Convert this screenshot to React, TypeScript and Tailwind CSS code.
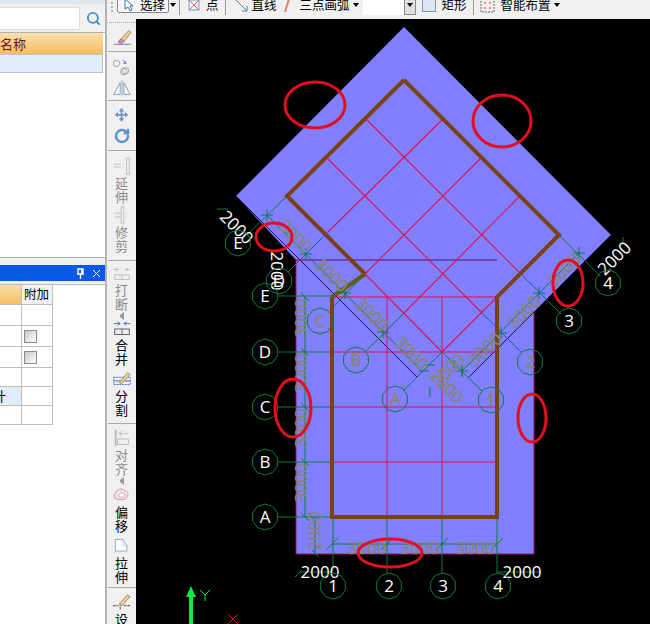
import React from "react";
import { Search, RotateCw } from "lucide-react";

const cjk = { fontFamily: '"Noto Sans CJK SC", "Liberation Sans", sans-serif' };

const G = "#0f7a3c";
const P = "#e0104f";
const GT = "#87876f";

function Sep({ cls }: { cls: string }) {
  return <div className={`shrink-0 w-[28px] mx-auto bg-[#a9a9a9] h-px ${cls}`} />;
}

function Tool({ icon, text, gray, cls, arrow }: { icon: React.ReactNode; text?: string[]; gray?: boolean; cls?: string; arrow?: boolean }) {
  return (
    <div className={`shrink-0 flex flex-col items-center ${cls ?? ""}`}>
      <div className="h-[20px] w-full flex items-center justify-center">{icon}</div>
      {text && (
        <div className={`flex flex-col items-center text-[13px] leading-[14px] ${gray ? "text-[#8a8a8a]" : "text-black"}`}>
          {text.map((t, i) => (
            <span key={i} className="h-[14px]">{t}</span>
          ))}
        </div>
      )}
      {arrow && <div className="h-[8px] w-0 border-y-[3px] border-r-[4px] border-y-transparent border-r-[#9a9a9a] mt-[1px]" />}
    </div>
  );
}

const Ic = ({ children, s = 20 }: { children: React.ReactNode; s?: number }) => (
  <svg width={s} height={(s * 20) / 22} viewBox="0 0 22 20" fill="none">{children}</svg>
);

const icons = {
  brush: (
    <Ic>
      <path d="M2 18h19" stroke="#6b7a8c" />
      <path d="M9 13 18 3l3 2-8 10z" fill="#e6cf9a" stroke="#a58a55" />
      <path d="M7 16c0-3 3-4 5-3l1 2c-1 2-4 2-6 1z" fill="#d98fb0" stroke="#a0608a" />
    </Ic>
  ),
  copy: (
    <Ic>
      <circle cx="5" cy="6" r="3.5" stroke="#9a9a9a" />
      <path d="M12 2l3 4m0 0v-2.5m0 2.5h-2.5" stroke="#4a7fb5" />
      <circle cx="15" cy="14" r="3.5" stroke="#9a9a9a" />
      <circle cx="13" cy="15" r="3.5" stroke="#9a9a9a" />
    </Ic>
  ),
  mirror: (
    <Ic>
      <path d="M11 1v18" stroke="#9aa8b8" />
      <path d="M9 4v13H2zM13 4v13h7z" stroke="#7a98bc" fill="#f6f9fd" />
    </Ic>
  ),
  move: (
    <Ic s={15}>
      <path d="M11 2v16M3 10h16" stroke="#6a96c4" strokeWidth="2.5" />
      <path d="M11 0l4 5H7zM11 20l4-5H7zM1 10l5-4v8zM21 10l-5-4v8z" fill="#6a96c4" />
    </Ic>
  ),
  rotate: <RotateCw size={16} strokeWidth={3.6} color="#5a8fd0" />,
  extend: (
    <Ic>
      <path d="M2 8h8M2 11h8" stroke="#c0c0c0" />
      <path d="M11 8h3M11 11h3" stroke="#d0d0d0" strokeDasharray="1 1" />
      <rect x="16" y="1" width="3" height="18" stroke="#bcbcbc" />
    </Ic>
  ),
  trim: (
    <Ic>
      <path d="M3 8h7M3 12h7" stroke="#bcbcbc" />
      <path d="M14 8h4M14 12h4" stroke="#d0d0d0" strokeDasharray="1 1" />
      <rect x="10" y="1" width="3" height="18" stroke="#bcbcbc" />
    </Ic>
  ),
  brk: (
    <Ic>
      <path d="M2 6h6m-2-2-2 2 2 2M20 6h-6m2-2 2 2-2 2" stroke="#b4bcc4" />
      <rect x="3" y="12" width="16" height="5" stroke="#bcbcbc" />
      <path d="M11 12v5" stroke="#bcbcbc" />
    </Ic>
  ),
  combine: (
    <Ic>
      <path d="M2 5h7m-3-2 3 2-3 2M20 5h-7m3-2-3 2 3 2" stroke="#3d78c0" />
      <rect x="3" y="11" width="16" height="6" stroke="#556" />
      <path d="M11 11v6" stroke="#556" />
    </Ic>
  ),
  split: (
    <Ic>
      <rect x="2" y="8" width="18" height="8" stroke="#3a5fc0" strokeDasharray="2 1" />
      <path d="M2 12h18" stroke="#3a5fc0" />
      <path d="M8 14 17 3l3 2-9 10z" fill="#e6cf9a" stroke="#a58a55" />
    </Ic>
  ),
  align: (
    <Ic>
      <path d="M4 1v18" stroke="#b8b8b8" strokeWidth="2" />
      <path d="M18 5H8m3-3-3 3 3 3" stroke="#b8b8b8" />
      <rect x="6" y="11" width="12" height="6" stroke="#b8b8b8" />
    </Ic>
  ),
  offset: (
    <Ic s={17}>
      <path d="M5 16a5 5 0 0 1-1-9c1-4 8-6 11-2 4 0 6 4 3 8-1 2-2 3-4 3z" stroke="#d8708a" fill="#f8e4ea" />
      <path d="M8 13c-2-1-1-4 1-4 1-2 4-2 5 0 2 0 2 3 0 4z" stroke="#8fa3b8" fill="#fff" />
    </Ic>
  ),
  stretch: (
    <Ic s={17}>
      <path d="M3 2h10l5 8v7H3z" stroke="#7a98bc" fill="#f8fafd" />
      <path d="M13 2v8h5" stroke="#9ab" strokeDasharray="1 1" />
    </Ic>
  ),
  set: (
    <Ic>
      <path d="M1 14h6M13 14h7M9 11v7" stroke="#333" strokeDasharray="3 1" />
      <path d="M8 12 17 2l3 2-9 10z" fill="#e6cf9a" stroke="#a58a55" />
    </Ic>
  ),
};

function Poly({ x, y, r = 13 }: { x: number; y: number; r?: number }) {
  const pts = Array.from({ length: 10 }, (_, i) => {
    const a = (Math.PI * 2 * i) / 10 + Math.PI / 10;
    return `${x + r * Math.cos(a)},${y + r * Math.sin(a)}`;
  }).join(" ");
  return <polygon points={pts} fill="none" stroke={G} strokeWidth="1" />;
}

function T({ x, y, s, a = 0, c = "#ffffff" }: { x: number; y: number; s: string; a?: number; c?: string }) {
  return (
    <text
      transform={`translate(${x} ${y}) rotate(${a})`}
      textAnchor="middle"
      dominantBaseline="central"
      fontFamily='"Open Sans", sans-serif'
      fontSize="17"
      fill={c}
      stroke={c === "#ffffff" ? "none" : c}
      strokeWidth="0.35"
    >
      {s}
    </text>
  );
}

const L = ({ d, c = G, w = 1 }: { d: string; c?: string; w?: number }) => <path d={d} stroke={c} strokeWidth={w} fill="none" />;

function Cad() {
  const circlesW: [number, number, string, string][] = [
    [238, 243, "E", "#ffffff"],
    [279, 281, "D", "#ffffff"],
    [265, 296, "E", "#ffffff"],
    [265, 352, "D", "#ffffff"],
    [265, 407, "C", "#ffffff"],
    [265, 462, "B", "#ffffff"],
    [265, 517, "A", "#ffffff"],
    [333, 586, "1", "#ffffff"],
    [389, 586, "2", "#ffffff"],
    [443, 586, "3", "#ffffff"],
    [498, 586, "4", "#ffffff"],
    [569, 321, "3", "#ffffff"],
    [608, 283, "4", "#ffffff"],
    [320, 321, "C", GT],
    [356, 360, "B", GT],
    [395, 399, "A", GT],
    [491, 400, "1", GT],
    [530, 362, "2", GT],
  ];
  const hs = [297, 352, 407, 462, 517];
  const vs = [332, 387, 442, 497];
  return (
    <svg width="514" height="605" viewBox="136 19 514 605" className="block">
      <polygon points="404,27 611,235 534,312 534,554 296,554 296,260 236,196" fill="#8080ff" />
      <L d="M296 260V554H534V312" c="#a5104e" />
      <L d="M236 196 417 377M469 377 610 236" c="#2a0a6a" />
      <L d="M295 260H497" c="#5a0a5a" />

      {hs.map((y) => <L key={y} d={`M332 ${y}H497`} c={P} />)}
      {vs.map((x) => <L key={x} d={`M${x} 297V517`} c={P} />)}
      <L d="M365 274 442 352M327 158 482 313M366 119 519 272" c={P} w={1.1} />
      <L d="M497 297 442 352M519 197 404 313M481 158 365 274M443 119 327 233" c={P} w={1.1} />

      {/* axes */}
      <L d="M442 352 482 391M482 313 521 352M519 272 561 314M559 235 600 276" />
      <L d="M442 352 403 391M404 313 365 352M365 274 330 310M327 233 288 272M287 196 247 235" />
      {[296, 352, 407, 462, 517].map((y) => <L key={y} d={`M278 ${y}H332`} />)}
      {[[333, 517, 573], [387, 517, 573], [442, 517, 573], [497, 517, 573]].map(([x, a, b]) => <L key={x} d={`M${x} ${a}V${b}`} />)}

      {/* dimension lines */}
      <L d="M267 215 422 371M579 253 462 371M305 297V517M315 517V555M332 544H497M300 572H332M498 572H540" />
      {[[267, 215], [306, 254], [345, 293], [383, 332], [579, 253], [539, 293], [501, 333], [462, 371]].map(([x, y], i) => (
        <L key={i} d={`M${x - 6} ${y}h12M${x} ${y - 6}v12`} />
      ))}
      {hs.map((y) => <L key={y} d={`M${301} ${y - 4}l8 8`} />)}
      {vs.map((x) => <L key={x} d={`M${x - 6} ${550}l12 -12`} />)}
      <L d="M308 513l8 8M312 550l7 7M295 577l7-7M217 209h11M623 245v-8" />
      <L d="M425 365h10M419 371h10M430 387v10M454 360v8M462 367v9" />

      <L d="M404 80 559 235 497 297V517H332V297" c="#7a4212" w={4} />
      <L d="M332 297 365 274" c="#5f5d14" w={4} />
      <L d="M404 80 287 196 365 274" c="#7a4212" w={4} />

      {/* dimension texts */}
      <T x={296} y={236} s="3000" a={45} c={GT} />
      <T x={332} y={275} s="3000" a={45} c={GT} />
      <T x={372} y={314} s="3000" a={45} c={GT} />
      <T x={412} y={353} s="3000" a={45} c={GT} />
      <T x={564} y={270} s="3000" a={-45} c={GT} />
      <T x={524} y={312} s="3000" a={-45} c={GT} />
      <T x={485} y={349} s="3000" a={-45} c={GT} />
      <T x={448} y={370} s="2000" a={-45} c={GT} />
      <T x={447} y={386} s="2000" a={45} c={GT} />
      <T x={300} y={318} s="3000" a={-90} c={GT} />
      <T x={300} y={373} s="3000" a={-90} c={GT} />
      <T x={300} y={428} s="3000" a={-90} c={GT} />
      <T x={300} y={483} s="3000" a={-90} c={GT} />
      <T x={314} y={531} s="2000" a={-90} c={GT} />
      <T x={367} y={547} s="3000" c={GT} />
      <T x={420} y={547} s="3000" c={GT} />
      <T x={475} y={547} s="3000" c={GT} />
      <T x={237} y={227} s="2000" a={45} />
      <T x={277} y={271} s="2000" a={90} />
      <T x={614} y={258} s="2000" a={-45} />
      <T x={320} y={571} s="2000" />
      <T x={522} y={571} s="2000" />

      {circlesW.map(([x, y, s, c], i) => (
        <g key={i}>
          <Poly x={x} y={y} />
          <T x={x} y={y - 1} s={s} c={c} />
        </g>
      ))}

      {/* red marks */}
      {[[315, 105, 30, 23], [502, 121, 29, 26], [274, 237, 18, 14], [568, 283, 15, 23], [293, 408, 18, 29], [532, 418, 14, 24], [390, 553, 32, 14]].map(([cx, cy, rx, ry], i) => (
        <ellipse key={i} cx={cx} cy={cy} rx={rx} ry={ry} fill="none" stroke="#e20f1e" strokeWidth="3" />
      ))}

      {/* UCS */}
      <path d="M191 586l5 11h-3v27h-4v-27h-3z" fill="#10e83a" />
      <L d="M200 590l5 5 5-5M205 595v6" c="#10e83a" />
      <L d="M228 614l10 10M238 614l-10 10" c="#d0141e" />
    </svg>
  );
}

function TopItem({ children, cls }: { children: React.ReactNode; cls?: string }) {
  return <div className={`flex items-center shrink-0 ${cls ?? ""}`}>{children}</div>;
}

const Caret = ({ cls }: { cls?: string }) => (
  <span className={`w-0 h-0 border-x-[3px] border-t-[4px] border-x-transparent border-t-black shrink-0 ${cls ?? ""}`} />
);
const VSep = ({ cls }: { cls: string }) => <span className={`w-px h-[20px] bg-[#9a9a9a] shrink-0 ${cls}`} />;

function TopBar() {
  return (
    <div className="h-[19px] bg-[#f0f0f0] overflow-hidden shrink-0">
      <div className="h-[10px] flex items-center text-[12.5px] leading-none text-black">
        <span className="ml-[4px] w-[2px] h-[14px] border-l-2 border-dotted border-[#b5b5b5] shrink-0" />
        <div className="ml-[4px] w-[52px] h-[22px] -mt-[6px] border border-[#8a8a8a] rounded-[2px] bg-[#f6f6f6] flex items-center shrink-0 pl-[5px] pt-[6px]">
          <svg width="12" height="14" viewBox="0 0 12 14" fill="none"><path d="M2 1v10l3-2 2 4 2-1-2-4h3z" stroke="#3f6fa5" fill="#fff" /></svg>
          <span className="ml-[5px] whitespace-nowrap">选择</span>
        </div>
        <Caret cls="ml-[1px]" />
        <VSep cls="ml-[3px]" />
        <TopItem cls="ml-[8px]">
          <svg width="12" height="12" viewBox="0 0 12 12" fill="none"><rect x="1" y="1" width="10" height="10" stroke="#7d95c5" /><path d="M1 1l10 10M11 1 1 11" stroke="#d06a7a" /></svg>
          <span className="ml-[6px]">点</span>
        </TopItem>
        <VSep cls="ml-[6px]" />
        <TopItem cls="ml-[8px]">
          <svg width="14" height="14" viewBox="0 0 14 14" fill="none"><path d="M1 1l12 12M13 8v5H8" stroke="#4d7fb8" /></svg>
          <span className="ml-[4px] whitespace-nowrap">直线</span>
        </TopItem>
        <TopItem cls="ml-[6px]">
          <svg width="8" height="14" viewBox="0 0 8 14" fill="none"><path d="M2 14 6 1" stroke="#d08a6a" strokeWidth="2" /></svg>
          <span className="ml-[9px] whitespace-nowrap">三点画弧</span>
          <Caret cls="ml-[3px]" />
        </TopItem>
        <div className="ml-[4px] w-[41px] h-[20px] bg-white shrink-0" />
        <div className="w-[12px] h-[20px] border border-[#8a8a8a] bg-[#e0e0e0] flex items-center justify-center shrink-0"><Caret /></div>
        <TopItem cls="ml-[6px]">
          <span className="w-[14px] h-[14px] border border-[#7d95c5] bg-[#dde7f7] shrink-0" />
          <span className="ml-[6px] whitespace-nowrap">矩形</span>
        </TopItem>
        <VSep cls="ml-[6px]" />
        <TopItem cls="ml-[6px]">
          <svg width="15" height="15" viewBox="0 0 15 15" fill="none"><rect x="1" y="1" width="13" height="13" stroke="#666" strokeDasharray="2 1" /><path d="M4 5h2M9 5h2M4 10h2M9 10h2" stroke="#c33" /></svg>
          <span className="ml-[6px] whitespace-nowrap">智能布置</span>
          <Caret cls="ml-[3px]" />
        </TopItem>
      </div>
    </div>
  );
}

function Side() {
  return (
    <div className="w-[29px] shrink-0 bg-[#f0f0f0] flex flex-col overflow-hidden">
      <div className="h-[8px] shrink-0 flex items-center"><div className="w-full h-px mt-[-2px] border-t border-dotted border-[#a5a5a5]" /></div>
      <Tool icon={icons.brush} />
      <Sep cls="mt-[4px] mb-[4px]" />
      <Tool icon={icons.copy} cls="mt-[1px]" />
      <Tool icon={icons.mirror} cls="mt-[1px]" />
      <Sep cls="mt-[2px] mb-[3px]" />
      <Tool icon={icons.move} cls="mt-[1px]" />
      <Tool icon={icons.rotate} cls="mt-[1px]" />
      <Sep cls="mt-[4px] mb-[5px]" />
      <Tool icon={icons.extend} gray text={["延", "伸"]} />
      <Tool icon={icons.trim} gray text={["修", "剪"]} cls="mt-[1px]" />
      <Sep cls="mt-[7px] mb-[2px]" />
      <Tool icon={icons.brk} gray text={["打", "断"]} arrow />
      <Tool icon={icons.combine} text={["合", "并"]} cls="-mt-[2px]" />
      <Tool icon={icons.split} text={["分", "割"]} cls="mt-[3px]" />
      <Sep cls="mt-[6px] mb-[4px]" />
      <Tool icon={icons.align} gray text={["对", "齐"]} arrow />
      <Tool icon={icons.offset} text={["偏", "移"]} />
      <Tool icon={icons.stretch} text={["拉", "伸"]} cls="mt-[3px]" />
      <Sep cls="mt-[3px] mb-[4px]" />
      <Tool icon={icons.set} text={["设"]} />
    </div>
  );
}

function Panels() {
  const cell = "border-r border-b border-[#bdbdbd]";
  const check = <span className="ml-[2px] w-[13px] h-[13px] border border-[#8a8a8a] bg-gradient-to-br from-[#c8c8c8] to-white" />;
  const rows: [string, React.ReactNode, string][] = [
    ["h-[21px]", null, ""],
    ["h-[21px]", check, ""],
    ["h-[21px]", check, ""],
    ["h-[19px]", null, ""],
    ["h-[19px]", null, "合计"],
    ["h-[19px]", null, ""],
  ];
  return (
    <div className="w-[107px] shrink-0 flex flex-col bg-[#f0f0f0] border-r-2 border-[#b4b4b4]">
      <div className="h-[4px] bg-[#dfe6f0] shrink-0" />
      <div className="h-[28px] shrink-0 flex items-center">
        <div className="w-[80px] h-[23px] bg-white border border-[#dcdcdc] rounded-r-[2px] border-l-0" />
        <Search size={15} strokeWidth={3} color="#3f8fd0" className="ml-[6px]" />
      </div>
      <div className="h-[226px] shrink-0 bg-white border-t border-b border-[#b0b0b0] overflow-hidden">
        <div className="h-[21px] w-[103px] bg-gradient-to-b from-[#fae0a8] to-[#f3bd62] flex items-center text-[13px] text-[#7a0c2a]">名称</div>
        <div className="h-[19px] w-[103px] bg-[#e0eefb] border border-l-0 border-[#b8c4d0]" />
      </div>
      <div className="h-[7px] shrink-0" />
      <div className="h-[16px] shrink-0 bg-[#0a58e6] flex items-center justify-end pr-[4px] gap-[7px]">
        <svg width="9" height="11" viewBox="0 0 9 11" fill="none"><path d="M2 1h5v5H2zM1 6h7M4.5 6v5" stroke="#fff" strokeWidth="1.4" /><path d="M6 1v5" stroke="#fff" strokeWidth="2" /></svg>
        <svg width="9" height="9" viewBox="0 0 9 9" fill="none"><path d="M1 1l7 7M8 1 1 8" stroke="#fff" /></svg>
      </div>
      <div className="flex-1 mt-[3px] bg-white border-t border-[#bdbdbd] overflow-hidden">
        <div className="flex w-[53px] h-[20px]">
          <div className={`w-[22px] bg-gradient-to-b from-[#fae0a8] to-[#f3bd62] ${cell}`} />
          <div className={`w-[31px] bg-[#f2f2f2] flex items-center pl-[2px] text-[12.5px] ${cell}`}>附加</div>
        </div>
        {rows.map(([h, c, t], i) => (
          <div key={i} className={`flex w-[53px] ${h}`}>
            <div className={`w-[22px] flex items-center text-[13px] overflow-hidden whitespace-nowrap ${t ? "bg-[#e0eefb]" : ""} ${cell}`}>
              {t && <span className="-ml-[20px]">{t}</span>}
            </div>
            <div className={`w-[31px] flex items-center ${cell}`}>{c}</div>
          </div>
        ))}
      </div>
    </div>
  );
}

export default function App() {
  return (
    <div className="w-[650px] h-[624px] flex overflow-hidden bg-black" style={cjk}>
      <Panels />
      <div className="flex-1 min-w-0 flex flex-col">
        <TopBar />
        <div className="flex-1 min-h-0 flex">
          <Side />
          <Cad />
        </div>
      </div>
    </div>
  );
}
